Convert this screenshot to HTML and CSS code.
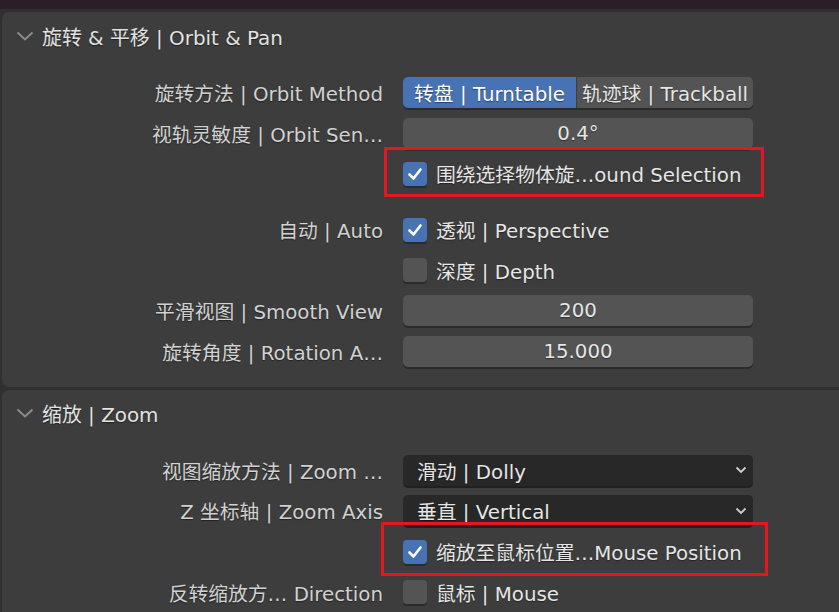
FILE: index.html
```html
<!DOCTYPE html>
<html lang="zh">
<head>
<meta charset="utf-8">
<link rel="stylesheet" href="styles.css">
</head>
<body>
<div class="topbar"></div>
<div class="area">
  <section class="panel p1">
    <div class="phead">
      <svg class="chev" width="18" height="10" viewBox="0 0 18 10"><path d="M1.5 1.5 L9 8.5 L16.5 1.5" fill="none" stroke="#8c8c8c" stroke-width="2"/></svg>
      <span>旋转 &amp; 平移 | Orbit &amp; Pan</span>
    </div>
    <div class="rows">
      <div class="row">
        <div class="label">旋转方法 | Orbit Method</div>
        <div class="ctrl seg">
          <div class="segbtn on">转盘 | Turntable</div>
          <div class="segbtn">轨迹球 | Trackball</div>
        </div>
      </div>
      <div class="row">
        <div class="label">视轨灵敏度 | Orbit Sen…</div>
        <div class="ctrl field">0.4°</div>
      </div>
      <div class="row">
        <div class="label"></div>
        <div class="ctrl chk hl hl1">
          <span class="box on"><svg width="18" height="18" viewBox="0 0 18 18"><path d="M3.5 9.5 L7.5 13.5 L14.5 4.5" fill="none" stroke="#fff" stroke-width="2.6" stroke-linecap="round" stroke-linejoin="round"/></svg></span>
          <span class="ctext">围绕选择物体旋…ound Selection</span>
        </div>
      </div>
      <div class="row sep">
        <div class="label">自动 | Auto</div>
        <div class="ctrl chk">
          <span class="box on"><svg width="18" height="18" viewBox="0 0 18 18"><path d="M3.5 9.5 L7.5 13.5 L14.5 4.5" fill="none" stroke="#fff" stroke-width="2.6" stroke-linecap="round" stroke-linejoin="round"/></svg></span>
          <span class="ctext">透视 | Perspective</span>
        </div>
      </div>
      <div class="row">
        <div class="label"></div>
        <div class="ctrl chk">
          <span class="box"></span>
          <span class="ctext">深度 | Depth</span>
        </div>
      </div>
      <div class="row">
        <div class="label">平滑视图 | Smooth View</div>
        <div class="ctrl field">200</div>
      </div>
      <div class="row">
        <div class="label">旋转角度 | Rotation A…</div>
        <div class="ctrl field">15.000</div>
      </div>
    </div>
  </section>
  <section class="panel p2">
    <div class="phead">
      <svg class="chev" width="18" height="10" viewBox="0 0 18 10"><path d="M1.5 1.5 L9 8.5 L16.5 1.5" fill="none" stroke="#8c8c8c" stroke-width="2"/></svg>
      <span>缩放 | Zoom</span>
    </div>
    <div class="rows">
      <div class="row">
        <div class="label">视图缩放方法 | Zoom …</div>
        <div class="ctrl drop"><span>滑动 | Dolly</span><svg width="12" height="8" viewBox="0 0 12 8"><path d="M1.5 1.5 L6 6 L10.5 1.5" fill="none" stroke="#d0d0d0" stroke-width="1.8"/></svg></div>
      </div>
      <div class="row">
        <div class="label">Z 坐标轴 | Zoom Axis</div>
        <div class="ctrl drop"><span>垂直 | Vertical</span><svg width="12" height="8" viewBox="0 0 12 8"><path d="M1.5 1.5 L6 6 L10.5 1.5" fill="none" stroke="#d0d0d0" stroke-width="1.8"/></svg></div>
      </div>
      <div class="row">
        <div class="label"></div>
        <div class="ctrl chk hl hl2">
          <span class="box on"><svg width="18" height="18" viewBox="0 0 18 18"><path d="M3.5 9.5 L7.5 13.5 L14.5 4.5" fill="none" stroke="#fff" stroke-width="2.6" stroke-linecap="round" stroke-linejoin="round"/></svg></span>
          <span class="ctext">缩放至鼠标位置…Mouse Position</span>
        </div>
      </div>
      <div class="row">
        <div class="label">反转缩放方… Direction</div>
        <div class="ctrl chk">
          <span class="box"></span>
          <span class="ctext">鼠标 | Mouse</span>
        </div>
      </div>
    </div>
  </section>
</div>
</body>
</html>
```
FILE: styles.css
```css
* { box-sizing: border-box; }
html, body { margin: 0; padding: 0; }
body {
  width: 839px;
  height: 612px;
  overflow: hidden;
  background: #303030;
  font-family: "DejaVu Sans", "Noto Sans CJK SC", sans-serif;
  font-size: 19.8px;
  color: #d9d9d9;
}
.topbar {
  height: 9px;
  background: #2a1f29;
}
.area {
  padding: 3px 0 0 2px;
  display: flex;
  flex-direction: column;
  gap: 3px;
}
.panel {
  background: #3d3d3d;
  border-radius: 7px 0 0 7px;
}
.p1 { padding-bottom: 20px; }
.p2 { padding-bottom: 20px; }
.phead {
  height: 49px;
  display: flex;
  align-items: center;
  padding-left: 14px;
  gap: 8px;
  color: #e3e3e3;
  font-size: 19.9px;
  text-shadow: 0 1px 1px rgba(0,0,0,0.5);
}
.p2 .phead { height: 47px; }
.chev { flex: none; margin-top: -2px; }
.rows {
  padding-top: 16px;
  display: flex;
  flex-direction: column;
  gap: 9.7px;
}
.p2 .rows { padding-top: 17.5px; }
.row {
  display: flex;
  align-items: center;
  height: 31px;
  gap: 20px;
}
.row.sep { margin-top: 15px; }
.label {
  width: 381px;
  flex: none;
  text-align: right;
  white-space: nowrap;
  color: #d2d2d2;
  text-shadow: 0 1px 1px rgba(0,0,0,0.45);
}
.ctrl {
  width: 350px;
  height: 31px;
  flex: none;
  color: #e6e6e6;
  text-shadow: 0 1px 1px rgba(0,0,0,0.45);
}
.field {
  background: #545454;
  border-radius: 5px;
  box-shadow: 0 2px 0 #2b2b2b;
  display: flex;
  align-items: center;
  justify-content: center;
}
.seg {
  display: flex;
  border-radius: 5px;
  overflow: hidden;
  box-shadow: 0 2px 0 #2b2b2b;
}
.segbtn {
  display: flex;
  align-items: center;
  justify-content: center;
  background: #545454;
  white-space: nowrap;
  flex: 1 1 0;
}
.segbtn.on {
  background: #4772b3;
  color: #fff;
  flex: 0 0 173px;
  margin-right: 1px;
}
.drop {
  background: #282828;
  border-radius: 5px;
  box-shadow: 0 2px 0 #202020;
  display: flex;
  align-items: center;
  justify-content: space-between;
  padding: 0 6px 0 14px;
}
.chk {
  display: flex;
  align-items: center;
  gap: 9px;
  position: relative;
}
.box {
  width: 24px;
  height: 24px;
  border-radius: 4px;
  background: #545454;
  box-shadow: 0 2px 0 #2b2b2b;
  display: flex;
  align-items: center;
  justify-content: center;
  flex: none;
}
.box.on { background: #4772b3; }
.ctext { white-space: nowrap; }
.hl::after {
  content: "";
  position: absolute;
  border: 3px solid #e4161f;
  pointer-events: none;
}
.hl1::after { left: -19px; right: -11px; top: -11px; bottom: -8px; }
.hl2::after { left: -22px; right: -15px; top: -14px; bottom: -9px; }
```
